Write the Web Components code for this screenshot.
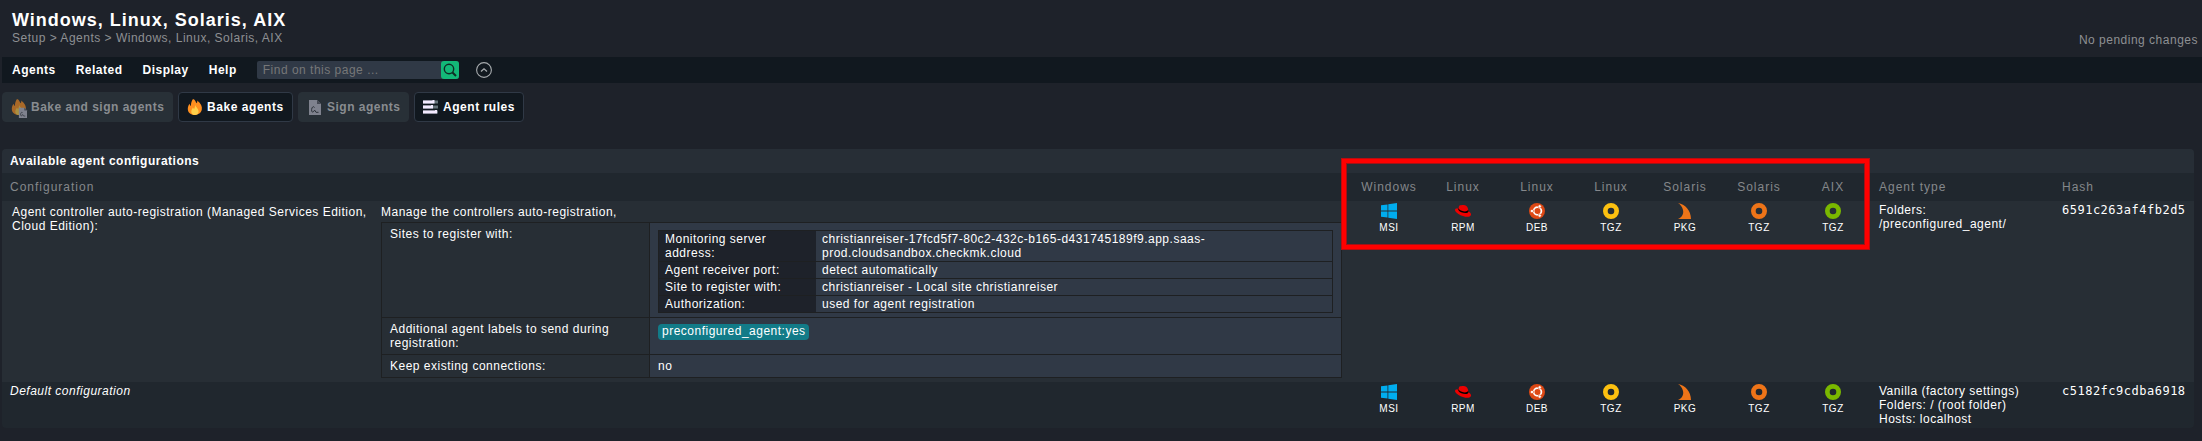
<!DOCTYPE html>
<html lang="en"><head><meta charset="utf-8"><title>Windows, Linux, Solaris, AIX</title>
<style>
body{margin:0;background:#1e222a;height:441px;overflow:hidden;font:12px/14px "Liberation Sans",Arial,sans-serif;letter-spacing:.5px;color:#fff}
</style></head><body>
<agent-page></agent-page>
<script>
const define=(name,html)=>customElements.define(name,class extends HTMLElement{
  constructor(){super();this.attachShadow({mode:'open'}).innerHTML=typeof html==='function'?html(this):html;}
});
const ring=c=>`<circle cx="8" cy="8" r="5.65" fill="none" stroke="${c}" stroke-width="4.7"/>`;
const flame=`<path d="M6 0C8.500 .8 8.600 3 9.600 4.200 10.400 3.600 10.400 2.600 10.200 1.600 14 4.600 15.400 7.600 14.800 10.600 14.200 14 11.400 16 7.600 16 3.800 16 .8 13.600.8 10 .8 7.800 1.600 6 2.600 4.800 2.800 6 3.200 6.600 4 7 3.800 4.200 4.600 2 6 0Z" fill="#ff8f1f"/><path d="M8 5.500C8.500 8 11.600 9.500 11.600 12.500 11.600 15 9.800 16 7.900 16 5.600 16 4.200 14.500 4.300 12.400 4.400 10.500 5.500 10 5.800 8.500 6.500 9 6.800 9.600 6.900 10.200 7.800 9 8.200 7.300 8 5.500Z" fill="#ffd04a"/>`;
const sheet=`<path d="M2 1H10L14 5V16H2Z" fill="#b9b9c8"/><path d="M10 1V5H14Z" fill="#5a5c68"/><path d="M7.500 8.500C6.500 6.500 4 8.500 4.700 12.300 5.200 14 7.500 12.300 7.500 11L9 13.300H11.500" fill="none" stroke="#30343c" stroke-width="1"/>`;
const icons={
 win:`<path d="M0 2.300 6.500 1.400V7.600H0ZM7.300 1.300 16 0V7.600H7.300ZM0 8.400H6.500V14.600L0 13.700ZM7.300 8.400H16V16L7.300 14.700Z" fill="#00adef"/>`,
 hat:`<path d="M4 3.500C4.500 1.500 6 2.600 7.400 2.100 9.500 1.500 12 2.500 12.800 5L13.600 8.200C15.500 9.200 16.600 11 15.700 12.600 14 15.200 7.500 13.400 3.500 10.900 1 9.300-.6 7.400.2 6.200 .8 5.400 2 5.600 3.300 5.700Z" fill="#e00"/><path d="M3.300 5.700C3 7 4 8.100 6.500 9.200 9.500 10.400 13 10.500 13.600 8.200L13.200 6.800C12 9 9 8.600 6.800 7.800 4.800 7.100 3.500 6 3.600 4.800Z" fill="#000"/>`,
 ubuntu:`<circle cx="8" cy="8" r="8" fill="#dd4814"/><circle cx="8.500" cy="8" r="3.900" fill="none" stroke="#fff" stroke-width="1.700"/><g fill="#fff" stroke="#dd4814" stroke-width=".6"><circle cx="3" cy="8" r="1.600"/><circle cx="10.700" cy="3.400" r="1.600"/><circle cx="10.700" cy="12.600" r="1.600"/></g>`,
 yellow:ring('#fcc010'),orange:ring('#ee7418'),green:ring('#7ab800'),
 pkg:`<path d="M1 0C8 1.200 14 7.500 14 16H1C5.500 14 6.800 10.500 6 7 5.300 4 3.500 1.500 1 0Z" fill="#ee7418"/>`,
 bake:flame,sign:sheet,
 bakesign:flame+`<g transform="translate(6.500 8) scale(.68)">${sheet}</g>`,
 rules:`<path d="M0 1.500H15V4.500H0ZM0 6.500H15V9.500H0ZM0 11.500H15V14.500H0Z" fill="#66737a"/><path d="M0 1.500H9.500V1H11.500V4.500H0ZM0 6.500H5V9.500H0ZM5 6.500H8V6H10V9.500H5ZM0 11.500H12V11H14V14.500H0Z" fill="#f3eaff"/>`
};
define('app-icon',el=>`<style>:host{display:block;width:16px;height:16px}svg{display:block;overflow:visible}</style><svg width="16" height="16" viewBox="0 0 16 16">${icons[el.getAttribute('name')]||''}</svg>`);
define('page-header',`<style>:host{display:flex;justify-content:space-between;height:57px;box-sizing:border-box;padding:10px 4px 0 12px}
h1{font-size:18px;line-height:20px;letter-spacing:1px;margin:0}.crumb,.changes{color:#8e9093}.crumb{padding-top:1px}.changes{padding-top:23px}</style>
<div><h1>Windows, Linux, Solaris, AIX</h1><div class="crumb">Setup &gt; Agents &gt; Windows, Linux, Solaris, AIX</div></div><div class="changes">No pending changes</div>`);
define('menu-bar',`<style>:host{display:flex;align-items:center;height:26px;margin-left:2px;background:#11181f;font-weight:700;padding-left:10px;box-sizing:border-box}
span{margin-right:20px}.search{display:flex;width:202px;height:18px;background:#303946;border-radius:2px;font-weight:400;color:#767778;align-items:center;justify-content:space-between;padding-left:6px;box-sizing:border-box}
svg{display:block}.up{margin-left:17px}</style><span>Agents</span><span>Related</span><span>Display</span><span>Help</span>
<div class="search">Find on this page ...<svg width="18" height="18"><rect width="18" height="18" rx="3" fill="#13b878"/><circle cx="8" cy="8" r="4.700" fill="none" stroke="#102c25" stroke-width="1.400"/><path d="M11.500 11.500 15 15" stroke="#102c25" stroke-width="2"/></svg></div>
<svg class="up" width="16" height="16"><circle cx="8" cy="8" r="7.400" fill="none" stroke="#a7abae" stroke-width="1.100"/><path d="M5 9.500 8 6.800 11 9.500" fill="none" stroke="#a7abae" stroke-width="1.300"/></svg>`);
define('action-button',el=>`<style>:host{display:flex;align-items:center;box-sizing:border-box;height:30px;border:1px solid #303946;border-radius:4px;background:#11181f;padding-left:8px;font-weight:700;white-space:nowrap;letter-spacing:.55px}
:host([off]){background:#283037;border-color:#283037;color:#888c90;letter-spacing:.5px}:host([off]) app-icon{opacity:.6}div{display:flex;gap:4px;align-items:center}</style><div><app-icon name="${el.getAttribute('icon')}"></app-icon><slot></slot></div>`);
define('button-row',`<style>:host{display:flex;gap:5px;margin:9px 0 27px 2px}</style><slot></slot>`);
define('package-link',el=>`<style>:host{display:flex;flex-direction:column;align-items:center;width:74px;padding-top:2px;font-size:10px;line-height:12px;gap:3px;letter-spacing:.5px}</style><app-icon name="${el.getAttribute('icon')}"></app-icon><slot></slot>`);
define('package-list',`<style>:host{display:flex}</style><package-link icon="win">MSI</package-link><package-link icon="hat">RPM</package-link><package-link icon="ubuntu">DEB</package-link><package-link icon="yellow">TGZ</package-link><package-link icon="pkg">PKG</package-link><package-link icon="orange">TGZ</package-link><package-link icon="green">TGZ</package-link>`);
define('site-details',`<style>:host{display:grid;grid-template-columns:157px 1fr;border:1px solid #1e2022;background:#1e2022;row-gap:1px;width:673px}
div{padding:1px 6px;min-height:14px;background:#303946}div:nth-of-type(odd){background:#1e222a}</style>
<div>Monitoring server<br>address:</div><div>christianreiser-17fcd5f7-80c2-432c-b165-d431745189f9.app.saas-<br>prod.cloudsandbox.checkmk.cloud</div><div>Agent receiver port:</div><div>detect automatically</div><div>Site to register with:</div><div>christianreiser - Local site christianreiser</div><div>Authorization:</div><div>used for agent registration</div>`);
define('rule-details',`<style>:host{display:grid;grid-template-columns:267px 691px;grid-template-rows:94px 36px 22px;gap:1px;border:1px solid #1e2022;background:#1e2022}
div{box-sizing:border-box;background:#272e35;padding:4px 8px}div:nth-of-type(even){background:#303946;padding:7px 8px}
b{display:inline-block;font-weight:400;background:#127b88;border-radius:4px;height:16px;line-height:14px;padding:0 3px 0 4px}div.p{padding-top:6px!important}div.n{padding-top:4px!important}</style>
<div>Sites to register with:</div><div><site-details></site-details></div><div>Additional agent labels to send during<br>registration:</div><div class="p"><b>preconfigured_agent:yes</b></div><div>Keep existing connections:</div><div class="n">no</div>`);
define('highlight-frame',`<style>:host{position:absolute;left:1339px;top:9px;width:529px;height:92px;box-sizing:border-box;border:1px solid #b80d10;box-shadow:inset 0 0 0 4px #f00,inset 0 0 0 5px #a01216}</style>`);
define('agent-table',`<style>:host{display:block;position:relative;margin-left:2px;width:2192px;border-radius:4px;background:#20272e}
.title{height:24px;line-height:24px;background:#272e36;border-radius:4px 4px 0 0;padding-left:8px;font-weight:700}
.row{display:grid;grid-template-columns:379px 971px 518px 183px 1fr}.head{height:28px;line-height:28px;color:#85888b;letter-spacing:1px}
.head>span:first-child{padding-left:8px}.types{display:grid;grid-template-columns:repeat(7,74px);text-align:center}.pad{padding-left:9px}
.one{height:181px;background:#272e35}.one>:first-child{padding:4px 0 0 10px}.manage{padding-top:4px}.manage rule-details{margin-top:3px;width:959px}.two{height:46px}.two>:first-child{padding:2px 0 0 8px;font-style:italic}
.type{padding:2px 0 0 9px}code{font:12px/14px "DejaVu Sans Mono",monospace;padding:2px 0 0 9px}</style>
<div class="title">Available agent configurations</div>
<div class="row head"><span>Configuration</span><span></span><div class="types"><span>Windows</span><span>Linux</span><span>Linux</span><span>Linux</span><span>Solaris</span><span>Solaris</span><span>AIX</span></div><span class="pad">Agent type</span><span class="pad">Hash</span></div>
<div class="row one"><div>Agent controller auto-registration (Managed Services Edition,<br>Cloud Edition):</div><div class="manage">Manage the controllers auto-registration,<rule-details></rule-details></div><package-list></package-list><div class="type">Folders:<br>/preconfigured_agent/</div><code>6591c263af4fb2d5</code></div>
<div class="row two"><div>Default configuration</div><div></div><package-list></package-list><div class="type">Vanilla (factory settings)<br>Folders: / (root folder)<br>Hosts: localhost</div><code>c5182fc9cdba6918</code></div><highlight-frame></highlight-frame>`);
define('agent-page',`<style>:host{display:block}</style><page-header></page-header><menu-bar></menu-bar><button-row><action-button off icon="bakesign" style="width:171px">Bake and sign agents</action-button><action-button icon="bake" style="width:115px">Bake agents</action-button><action-button off icon="sign" style="width:111px">Sign agents</action-button><action-button icon="rules" style="width:110px">Agent rules</action-button></button-row><agent-table></agent-table>`);
</script></body></html>
